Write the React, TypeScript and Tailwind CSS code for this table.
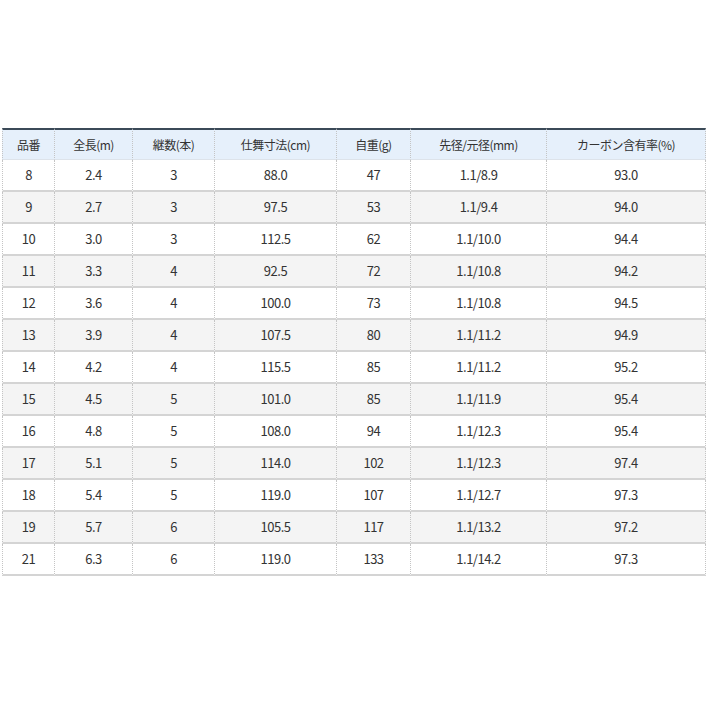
const headers = ["品番", "全長(m)", "継数(本)", "仕舞寸法(cm)", "自重(g)", "先径/元径(mm)", "カーボン含有率(%)"];

const widths = ["w-[53px]", "w-[78px]", "w-[82px]", "w-[122px]", "w-[74px]", "w-[136px]", "w-[159px]"];

const rows: string[][] = [
  ["8", "2.4", "3", "88.0", "47", "1.1/8.9", "93.0"],
  ["9", "2.7", "3", "97.5", "53", "1.1/9.4", "94.0"],
  ["10", "3.0", "3", "112.5", "62", "1.1/10.0", "94.4"],
  ["11", "3.3", "4", "92.5", "72", "1.1/10.8", "94.2"],
  ["12", "3.6", "4", "100.0", "73", "1.1/10.8", "94.5"],
  ["13", "3.9", "4", "107.5", "80", "1.1/11.2", "94.9"],
  ["14", "4.2", "4", "115.5", "85", "1.1/11.2", "95.2"],
  ["15", "4.5", "5", "101.0", "85", "1.1/11.9", "95.4"],
  ["16", "4.8", "5", "108.0", "94", "1.1/12.3", "95.4"],
  ["17", "5.1", "5", "114.0", "102", "1.1/12.3", "97.4"],
  ["18", "5.4", "5", "119.0", "107", "1.1/12.7", "97.3"],
  ["19", "5.7", "6", "105.5", "117", "1.1/13.2", "97.2"],
  ["21", "6.3", "6", "119.0", "133", "1.1/14.2", "97.3"],
];

export default function App() {
  return (
    <div className="w-[707px] h-[707px] bg-white pt-[128px] pl-[2px] font-['Noto_Sans_CJK_JP','Liberation_Sans',sans-serif] text-[12px] text-[#333]">
      <table className="border-separate border-spacing-0 table-fixed w-[704px]">
        <thead>
          <tr>
            {headers.map((h, i) => (
              <th
                key={h}
                className={`${widths[i]} h-[32px] bg-[#e6f0fb] border-t-2 border-t-[#3b4a58] border-b border-b-[#dde3ea] border-r border-r-[#c4c4c4] border-dotted font-normal text-center tracking-[-0.5px] ${i === 0 ? "border-l border-l-[#c4c4c4]" : ""}`}
                style={{ borderTopStyle: "solid", borderBottomStyle: "solid" }}
              >
                {h}
              </th>
            ))}
          </tr>
        </thead>
        <tbody>
          {rows.map((r, ri) => (
            <tr key={r[0]} className={ri % 2 === 1 ? "bg-[#f4f4f4]" : "bg-white"}>
              {r.map((c, ci) => (
                <td
                  key={ci}
                  className={`h-[32px] text-center text-[13px] tracking-[-0.5px] border-r border-dotted border-r-[#c4c4c4] border-b-2 border-b-[#d4d4d4] ${ci === 0 ? "border-l border-l-[#c4c4c4]" : ""}`}
                  style={{ borderBottomStyle: "solid" }}
                >
                  {c}
                </td>
              ))}
            </tr>
          ))}
        </tbody>
      </table>
    </div>
  );
}
